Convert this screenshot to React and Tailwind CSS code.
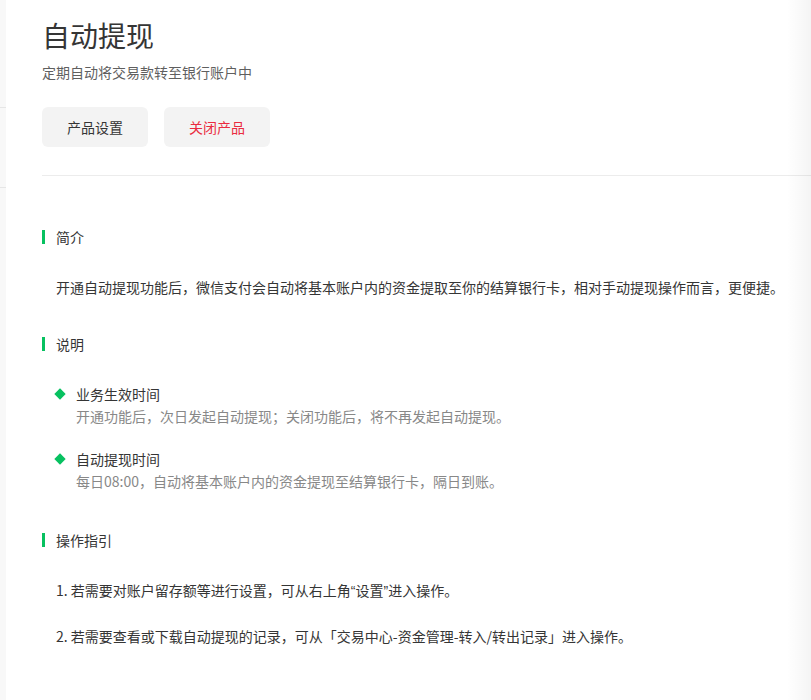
import React from "react";

const font = { fontFamily: '"Noto Sans CJK SC", "Noto Sans", sans-serif' };

function SectionTitle({ children, className = "" }) {
  return (
    <div className={`flex items-center h-[20px] ${className}`}>
      <span className="w-[3px] h-[14px] bg-[#07c160]" />
      <span className="ml-[11px] text-[14px] leading-[20px] text-[#353535]">{children}</span>
    </div>
  );
}

function Item({ title, desc, className = "" }) {
  return (
    <div className={`flex pl-[56px] ${className}`}>
      <div className="w-[20px] h-[22px] flex items-center">
        <span className="block w-[8px] h-[8px] bg-[#07c160] rotate-45" />
      </div>
      <div>
        <div className="text-[14px] leading-[22px] text-[#353535]">{title}</div>
        <div className="text-[14px] leading-[22px] text-[#888888]">{desc}</div>
      </div>
    </div>
  );
}

const q = { fontFamily: '"Liberation Sans", sans-serif' };

export default function App() {
  return (
    <div className="relative w-[811px] h-[700px] bg-white overflow-hidden flex" style={font}>
      <div className="w-[6px] bg-[#f8f8f8] flex flex-col shrink-0">
        <div className="h-[107px]" />
        <div className="h-px bg-[#e6e6e6]" />
        <div className="h-[79px]" />
        <div className="h-px bg-[#e6e6e6]" />
      </div>
      <div className="flex-1 pl-[36px] pt-[15px]">
        <div className="text-[28px] leading-[40px] text-[#353535]">自动提现</div>
        <div className="mt-[6px] text-[14px] leading-[22px] text-[#5f5f5f]">定期自动将交易款转至银行账户中</div>
        <div className="mt-[24px] flex gap-[16px]">
          <button className="w-[106px] h-[40px] rounded-[6px] bg-[#f3f3f3] text-[14px] text-[#353535]">产品设置</button>
          <button className="w-[106px] h-[40px] rounded-[6px] bg-[#f3f3f3] text-[14px] text-[#ea2b40]">关闭产品</button>
        </div>
        <div className="mt-[28px] h-px bg-[#ececec]" />

        <SectionTitle className="mt-[51px]">简介</SectionTitle>
        <p className="mt-[29px] pl-[14px] text-[14px] leading-[22px] text-[#353535] whitespace-nowrap">
          开通自动提现功能后，微信支付会自动将基本账户内的资金提取至你的结算银行卡，相对手动提现操作而言，更便捷。
        </p>

        <SectionTitle className="mt-[36px]">说明</SectionTitle>
        <div className="-ml-[42px]">
          <Item className="mt-[29px]" title="业务生效时间" desc="开通功能后，次日发起自动提现；关闭功能后，将不再发起自动提现。" />
          <Item className="mt-[21px]" title="自动提现时间" desc="每日08:00，自动将基本账户内的资金提现至结算银行卡，隔日到账。" />
        </div>

        <SectionTitle className="mt-[38px]">操作指引</SectionTitle>
        <div className="pl-[14px] text-[14px] leading-[22px] text-[#353535]">
          <div className="mt-[29px]">1. 若需要对账户留存额等进行设置，可从右上角<span style={q}>“</span>设置<span style={q}>”</span>进入操作。</div>
          <div className="mt-[23px]">2. 若需要查看或下载自动提现的记录，可从「交易中心-资金管理-转入/转出记录」进入操作。</div>
        </div>
      </div>
      <div className="absolute right-0 top-0 h-full w-[24px] bg-gradient-to-r from-[rgba(0,0,0,0)] to-[rgba(0,0,0,0.045)] pointer-events-none" />
    </div>
  );
}
